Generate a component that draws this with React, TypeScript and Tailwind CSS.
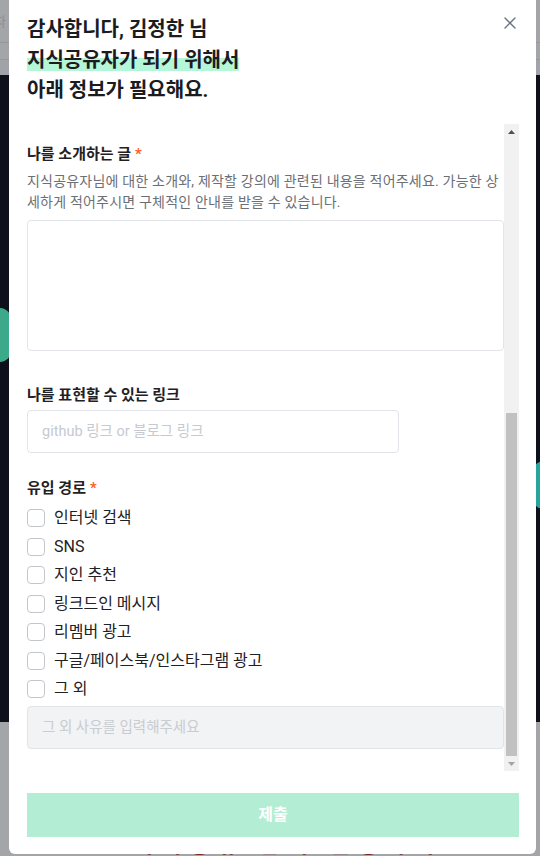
import { useCallback } from 'react';

const hiddenFields = [
  { label: '이름', placeholder: '이름을 입력해주세요' },
  { label: '이메일', placeholder: 'example@email.com' },
  { label: '연락처', placeholder: '010-0000-0000' },
  { label: '희망 강의 분야', placeholder: '예) 프론트엔드, 데이터 분석' },
  { label: '현재 직무', placeholder: '예) 백엔드 개발자' },
];

const sources = [
  '인터넷 검색',
  'SNS',
  '지인 추천',
  '링크드인 메시지',
  '리멤버 광고',
  '구글/페이스북/인스타그램 광고',
  '그 외',
];

function Required() {
  return <span className="ml-1 text-[#ff5a24]">*</span>;
}

function CloseIcon() {
  return (
    <svg width="12" height="12" viewBox="0 0 12 12" fill="none">
      <path d="M1 1L11 11M11 1L1 11" stroke="#6b7280" strokeWidth="1.4" strokeLinecap="round" />
    </svg>
  );
}

// classic scrollbar look, scrolled to the end
function ScrollBar() {
  return (
    <div className="w-[15px] flex flex-col bg-[#f1f1f1]">
      <div className="h-[15px] flex items-center justify-center">
        <svg width="7" height="4" viewBox="0 0 7 4">
          <polygon points="0,4 3.5,0 7,4" fill="#505050" />
        </svg>
      </div>
      <div className="flex-1 flex flex-col justify-end px-[2px]">
        <div className="h-[343px] bg-[#c1c1c1]" />
      </div>
      <div className="h-[15px] flex items-center justify-center">
        <svg width="7" height="4" viewBox="0 0 7 4">
          <polygon points="0,0 7,0 3.5,4" fill="#a3a3a3" />
        </svg>
      </div>
    </div>
  );
}

export default function App() {
  const scrollToEnd = useCallback((el: HTMLDivElement | null) => {
    if (el) {
      el.scrollTop = el.scrollHeight;
      requestAnimationFrame(() => {
        el.scrollTop = el.scrollHeight;
      });
    }
  }, []);

  return (
    <div className="relative w-[540px] h-[856px] overflow-hidden font-[Roboto,'Noto_Sans_CJK_KR',sans-serif]">
      {/* page behind the overlay */}
      <div className="flex flex-col h-full">
        <div className="h-[77px] flex flex-col bg-[#a3a5a9]">
          <div className="h-[43px] border-b border-[#94979b] text-[13px] leading-[43px] text-[#8c8f93] -ml-[6px]">자</div>
          <div className="h-[17px] border-b border-[#96999d]" />
          <div className="flex-1 bg-[#a0a3a7]" />
        </div>
        <div className="relative h-[666px] bg-[#0e111b]">
          <div className="absolute left-[-14px] top-[233px] w-[26px] h-[54px] rounded-full bg-[#3ca98a]" />
          <div className="absolute right-[-16px] top-[386px] w-[24px] h-[48px] rounded-full bg-[#27a59d]" />
        </div>
        <div className="flex-1 bg-[#a3a5a9] pt-[112px] pl-[133px]">
          <div className="text-[22px] font-bold leading-none text-[#7a2c24] tracking-[8px]">지식공유 참여 신청하기</div>
        </div>
      </div>

      {/* modal */}
      <div className="absolute left-[9px] top-[-8px] w-[527px] h-[862px] rounded-md bg-white pl-[18px] pr-[17px] pt-[22px] pb-[17px] flex flex-col">
        <div className="flex items-start justify-between">
          <h2 className="text-[20px] font-bold leading-[30.5px] text-[#1b1c1f]">
            감사합니다, 김정한 님
            <br />
            <span className="bg-[linear-gradient(transparent_42%,#b5f5d8_42%,#b5f5d8_94%,transparent_94%)]">
              지식공유자가 되기 위해서
            </span>
            <br />
            아래 정보가 필요해요.
          </h2>
          <button className="mt-[3px] mr-[3px] p-0">
            <CloseIcon />
          </button>
        </div>

        <div className="mt-[18.5px] h-[647px] flex">
          <div ref={scrollToEnd} className="flex-1 overflow-y-auto [scrollbar-width:none]">
            <div className="pt-[26px] pb-[22.5px]">
              {/* fields above the fold */}
              {hiddenFields.map((f, i) => (
                <div key={f.label} className={i === 0 ? '' : 'mt-[33px]'}>
                  <div className="text-[15px] font-semibold leading-[22px] text-[#1f2124]">
                    {f.label}
                    <Required />
                  </div>
                  <input
                    placeholder={f.placeholder}
                    className="mt-1 w-[372px] h-[43px] rounded border border-[#e1e4e8] px-[14px] text-[14.5px] placeholder:text-[#c6cad0] outline-none"
                  />
                </div>
              ))}

              {/* introduction */}
              <div className="mt-[33px]">
                <div className="text-[15px] font-semibold leading-[22px] text-[#1f2124]">
                  나를 소개하는 글
                  <Required />
                </div>
                <p className="mt-[6px] text-[14px] leading-[21px] tracking-[0.2px] text-[#6b6f76]">
                  지식공유자님에 대한 소개와, 제작할 강의에 관련된 내용을 적어주세요. 가능한 상세하게 적어주시면 구체적인 안내를 받을 수 있습니다.
                </p>
                <textarea className="mt-[7px] block w-full h-[131px] rounded border border-[#e1e4e8] resize-none outline-none p-3 text-[15px]" />
              </div>

              {/* link */}
              <div className="mt-[33px]">
                <div className="text-[15px] font-semibold leading-[22px] text-[#1f2124]">나를 표현할 수 있는 링크</div>
                <input
                  placeholder="github 링크 or 블로그 링크"
                  className="mt-1 block w-[372px] h-[43px] rounded border border-[#e1e4e8] px-[14px] text-[14.5px] placeholder:text-[#c6cad0] outline-none"
                />
              </div>

              {/* sources */}
              <div className="mt-6">
                <div className="text-[15px] font-semibold leading-[22px] text-[#1f2124]">
                  유입 경로
                  <Required />
                </div>
                <div className="mt-[5px] flex flex-col">
                  {sources.map((s) => (
                    <label key={s} className="h-[28.5px] flex items-center gap-[9px]">
                      <input
                        type="checkbox"
                        className="appearance-none w-[18px] h-[18px] rounded-[4px] border border-[#c3c6cb] bg-white"
                      />
                      <span className="text-[16px] text-[#1f2124]">{s}</span>
                    </label>
                  ))}
                </div>
                <input
                  disabled
                  placeholder="그 외 사유를 입력해주세요"
                  className="mt-0.5 block w-full h-[43px] rounded border border-[#e1e4e8] bg-[#f2f3f5] px-[14px] text-[14.5px] placeholder:text-[#c9ccd1] outline-none"
                />
              </div>
            </div>
          </div>
          <ScrollBar />
        </div>

        <button className="mt-[22px] h-[44px] w-full bg-[#b3eed4] text-[16px] font-bold text-white">
          제출
        </button>
      </div>
    </div>
  );
}
